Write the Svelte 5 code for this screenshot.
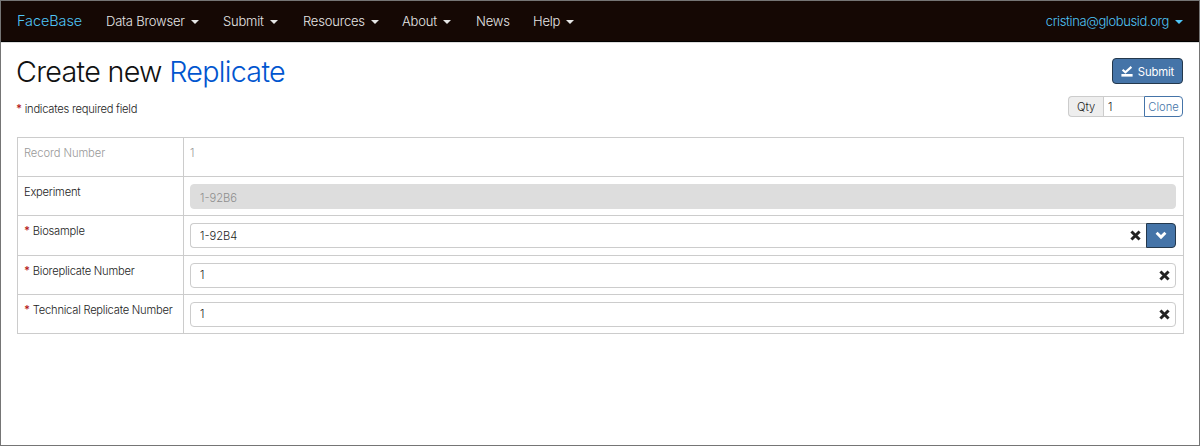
<script>
  const menu = [
    { label: 'Data Browser', key: 'data', caret: true },
    { label: 'Submit', key: 'submit', caret: true },
    { label: 'Resources', key: 'resources', caret: true },
    { label: 'About', key: 'about', caret: true },
    { label: 'News', key: 'news', caret: false },
    { label: 'Help', key: 'help', caret: true }
  ];
  const rows = [
    { label: 'Record Number', value: '1', kind: 'plain' },
    { label: 'Experiment', value: '1-92B6', kind: 'disabled' },
    { label: 'Biosample', value: '1-92B4', kind: 'picker', required: true },
    { label: 'Bioreplicate Number', value: '1', kind: 'text', required: true },
    { label: 'Technical Replicate Number', value: '1', kind: 'text', required: true }
  ];
</script>

{#snippet cross()}
  <svg class="cross" viewBox="0 0 10 10" width="11" height="11"><path d="M1.3 1.3 8.7 8.7M8.7 1.3 1.3 8.7" stroke="#222" stroke-width="2.7" /></svg>
{/snippet}

<div class="page">
  <nav>
    <a class="brand">FaceBase</a>
    {#each menu as m}
      <a class="item {m.key}"><span>{m.label}</span>{#if m.caret}<i class="caret"></i>{/if}</a>
    {/each}
    <a class="user"><span>cristina@globusid.org</span><i class="caret"></i></a>
  </nav>
  <header>
    <div>
      <h1>Create new <span>Replicate</span></h1>
      <p><b class="star">*</b> indicates required field</p>
    </div>
    <div class="actions">
      <button class="submit-btn">
        <svg viewBox="0 0 12 11" width="12" height="11"><path d="M1.6 3.7 4.4 6.3 10.4.9" fill="none" stroke="#fff" stroke-width="2.1" /><path d="M.4 8h11.2v2.6H.4z" fill="#fff" /></svg>
        <span>Submit</span>
      </button>
      <div class="qty"><span class="addon">Qty</span><span class="num">1</span><button class="clone">Clone</button></div>
    </div>
  </header>
  <div class="table">
    {#each rows as r}
      <div class="row {r.kind}">
        <div class="label">{#if r.required}<b class="star">*</b>{/if}<span>{r.label}</span></div>
        <div class="cell">
          {#if r.kind === 'plain'}
            <span>{r.value}</span>
          {:else}
            <div class="field">
              <span>{r.value}</span>
              {#if r.kind !== 'disabled'}{@render cross()}{/if}
            </div>
            {#if r.kind === 'picker'}
              <button class="pick"><svg viewBox="0 0 12 9" width="12" height="9"><path d="M1.6 1.8 6 6.1 10.4 1.8" fill="none" stroke="#fff" stroke-width="2.9" /></svg></button>
            {/if}
          {/if}
        </div>
      </div>
    {/each}
  </div>
</div>

<style>
  .page { box-sizing: border-box; width: 1200px; height: 446px; border: 1px solid #757575; background: #fff; font-family: Inter, "Liberation Sans", sans-serif; font-weight: 300; font-size: 11.2px; color: #1c1c1c; overflow: hidden; white-space: nowrap; }
  button { font: inherit; padding: 0; box-sizing: border-box; }
  nav { box-sizing: border-box; height: 41px; display: flex; align-items: center; background: #150804; border-bottom: 1px solid #000; padding: 0 16px; font-size: 13px; letter-spacing: -0.2px; color: #e6e6e6; box-shadow: 0 1px #ddd; }
  nav a { display: flex; align-items: center; box-sizing: border-box; flex: none; height: 38px; }
  .brand { width: 89px; color: #4fc5f7; font-size: 14.4px; letter-spacing: -0.05px; padding-bottom: 2px; }
  .data { width: 117px; }
  .submit { width: 80px; }
  .resources { width: 99px; }
  .about { width: 74px; }
  .news { width: 57px; }
  .caret { border: 4px solid transparent; border-top: 4.5px solid currentColor; border-bottom: 0; margin-left: 6px; margin-top: 1px; }
  .user { margin-left: auto; color: #4fc5f7; letter-spacing: -0.39px; }
  header { display: flex; justify-content: space-between; height: 95px; padding: 0 16px 0 15px; box-sizing: border-box; }
  h1 { margin: 12px 0 0; font-weight: 300; font-size: 28.7px; line-height: 36px; letter-spacing: -0.7px; color: #111; }
  h1 span { color: #0055cf; }
  p { margin: 10px 0 0; line-height: 18px; letter-spacing: -0.25px; }
  .star { color: #b51a1a; font-weight: 600; margin-right: 3px; }
  p .star { margin-right: 0; }
  .actions { display: flex; flex-direction: column; align-items: flex-end; padding-top: 16px; }
  .submit-btn { width: 71px; height: 26px; display: flex; align-items: center; justify-content: center; gap: 5px; border: 1px solid #24384c; border-radius: 4px; background: #4574a8; color: #fff; font-weight: 400; font-size: 11.3px; letter-spacing: -0.15px; padding-top: 1px; }
  .qty { display: flex; margin-top: 12px; height: 21px; line-height: 20px; }
  .addon, .num { box-sizing: border-box; border: 1px solid #ccc; border-right: 0; }
  .addon { width: 35px; padding-left: 8px; background: #eee; border-radius: 4px 0 0 4px; }
  .num { width: 41px; padding-left: 4px; border-left: 1px solid #ccc; }
  .clone { width: 39px; color: #4574a8; background: #fff; border: 1px solid #4574a8; border-radius: 0 4px 4px 0; }
  .table { margin: 0 15px 0 16px; border: 1px solid #ccc; border-top: 0; height: 197px; box-sizing: border-box; }
  .row { display: grid; grid-template-columns: 166px 1fr; height: 39.2px; box-sizing: border-box; border-top: 1px solid #ccc; }
  .label { padding: 6px 0 0 6px; line-height: 18px; border-right: 1px solid #ccc; letter-spacing: -0.24px; }
  .cell { display: flex; padding: 7px 7px 0 6px; }
  .plain { color: #999; }
  .plain .label { letter-spacing: -0.08px; }
  .plain .cell { line-height: 18px; padding-top: 6px; }
  .field { flex: 1; height: 25px; box-sizing: border-box; display: flex; align-items: center; justify-content: space-between; border: 1px solid #ccc; border-radius: 4px; padding: 0 5px 0 9px; }
  .disabled .field { background: #ddd; border-color: #ddd; color: #8d8d8d; padding-top: 2px; }
  .picker .field { border-radius: 4px 0 0 4px; border-right: 0; }
  .pick { width: 30px; height: 25px; display: flex; align-items: center; justify-content: center; background: #4574a8; border: 1px solid #24384c; border-radius: 0 4px 4px 0; }
</style>
